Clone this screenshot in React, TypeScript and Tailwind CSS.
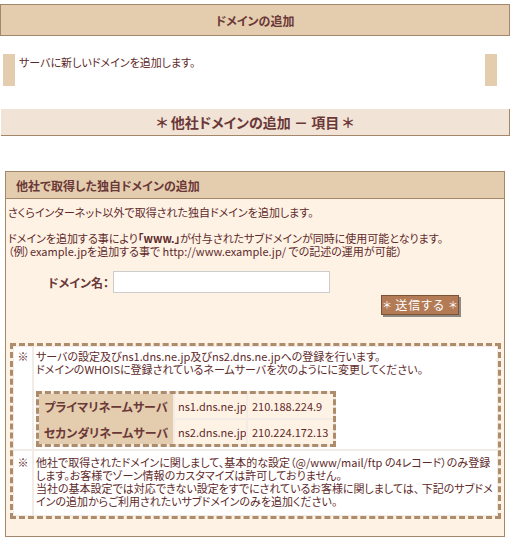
export default function App() {
  return (
    <div className="w-[513px] h-[545px] overflow-hidden bg-white font-['Noto_Sans_CJK_JP',sans-serif] [font-feature-settings:'palt'] text-[11px] leading-[13px] text-[#5e2a2a]">
      {/* Page title */}
      <div className="pt-[4px]">
        <div className="w-[510px] h-[32px] border border-[#a4866a] bg-[#e4cdae] flex items-center justify-center text-[12px] font-bold text-[#6b3838]">
          ドメインの追加
        </div>
      </div>

      {/* Intro */}
      <div className="mt-[18px] ml-[3px] w-[494px] h-[32px] border-x-[12px] border-[#e4cdae] pl-[4px] pt-[2px]">
        サーバに新しいドメインを追加します。
      </div>

      {/* Section heading */}
      <div className="mt-[23px] ml-[1px] w-[509px] h-[27px] bg-[#f1e3d5] border-r border-b border-[#a4866a] flex items-center justify-center text-[14px] font-bold text-[#6b3838]">
        ＊ 他社ドメインの追加 － 項目 ＊
      </div>

      {/* Panel */}
      <div className="mt-[35px] ml-[5px] w-[500px] border border-[#a4866a] bg-[#fef2e5]">
        <div className="h-[27px] bg-[#e4cdae] border-b border-[#a4866a] pl-[10px] flex items-center text-[12px] font-bold text-[#6b3838]">
          他社で取得した独自ドメインの追加
        </div>

        <div className="pt-[7px] pb-[17px]">
          <p className="pl-[2px] whitespace-nowrap">
            さくらインターネット以外で取得された独自ドメインを追加します。
            <br />
            <br />
            ドメインを追加する事により<span className="font-bold">「www.」</span>が付与されたサブドメインが同時に使用可能となります。
            <br />
            （例）example.jpを追加する事で http://www.example.jp/ での記述の運用が可能）
          </p>

          {/* Form */}
          <div className="mt-[13px] flex items-center">
            <div className="w-[107px] pr-[4px] text-right text-[12px] font-bold text-[#6b3838]">ドメイン名：</div>
            <div className="w-[217px] h-[22px] border border-[#cccccc] bg-white" />
          </div>
          <div className="mt-[2px] pl-[375px]">
            <div className="w-[78px] h-[20px] bg-[#b27b55] border border-[#7d5235] shadow-[2px_2px_0_#8f8a85] flex items-center justify-center gap-[4px] whitespace-nowrap text-white text-[12px] leading-[18px]">
              <span className="text-[10px]">＊</span>
              <span className="tracking-[1px]">送信する</span>
              <span className="text-[10px]">＊</span>
            </div>
          </div>

          {/* Notes */}
          <div className="mt-[28px] ml-[4px] w-[491px] border-[3px] border-dashed border-[#ad8c6c]">
            <div className="grid grid-cols-[18px_minmax(0,1fr)] gap-[2px] p-[1px] bg-[#f3ece6]">
              <div className="bg-white pt-[3px] text-center">※</div>
              <div className="bg-white pt-[3px] pb-[2px] pl-[2px]">
                <p className="whitespace-nowrap">
                  サーバの設定及びns1.dns.ne.jp及びns2.dns.ne.jpへの登録を行います。
                  <br />
                  ドメインのWHOISに登録されているネームサーバを次のようにに変更してください。
                </p>
                <div className="mt-[15px] w-[300px] border-[3px] border-dashed border-[#ad8c6c] bg-[#f3ece6] flex">
                  <div className="w-[134px] bg-[#e4cdae] flex flex-col gap-[2px] text-[12px] font-bold text-[#6b3838]">
                    <div className="h-[24px] flex items-center justify-center">プライマリネームサーバ</div>
                    <div className="h-[24px] flex items-center justify-center">セカンダリネームサーバ</div>
                  </div>
                  <div className="ml-[2px] grid grid-cols-[71px_85px] grid-rows-[24px_24px] gap-[2px]">
                    <div className="bg-[#fef2e5] pl-[3px] flex items-center overflow-hidden">ns1.dns.ne.jp</div>
                    <div className="bg-[#fef2e5] pl-[4px] flex items-center overflow-hidden">210.188.224.9</div>
                    <div className="bg-[#fef2e5] pl-[3px] flex items-center overflow-hidden">ns2.dns.ne.jp</div>
                    <div className="bg-[#fef2e5] pl-[4px] flex items-center overflow-hidden">210.224.172.13</div>
                  </div>
                </div>
              </div>

              <div className="bg-white pt-[5px] text-center">※</div>
              <div className="bg-white pt-[5px] pb-[7px] pl-[2px]">
                <p className="whitespace-nowrap">
                  他社で取得されたドメインに関しまして、基本的な設定（@/www/mail/ftp の4レコード）のみ登録
                  <br />
                  します。お客様でゾーン情報のカスタマイズは許可しておりません。
                  <br />
                  当社の基本設定では対応できない設定をすでにされているお客様に関しましては、 下記のサブドメ
                  <br />
                  インの追加からご利用されたいサブドメインのみを追加ください。
                </p>
              </div>
            </div>
          </div>
        </div>
      </div>
    </div>
  );
}
